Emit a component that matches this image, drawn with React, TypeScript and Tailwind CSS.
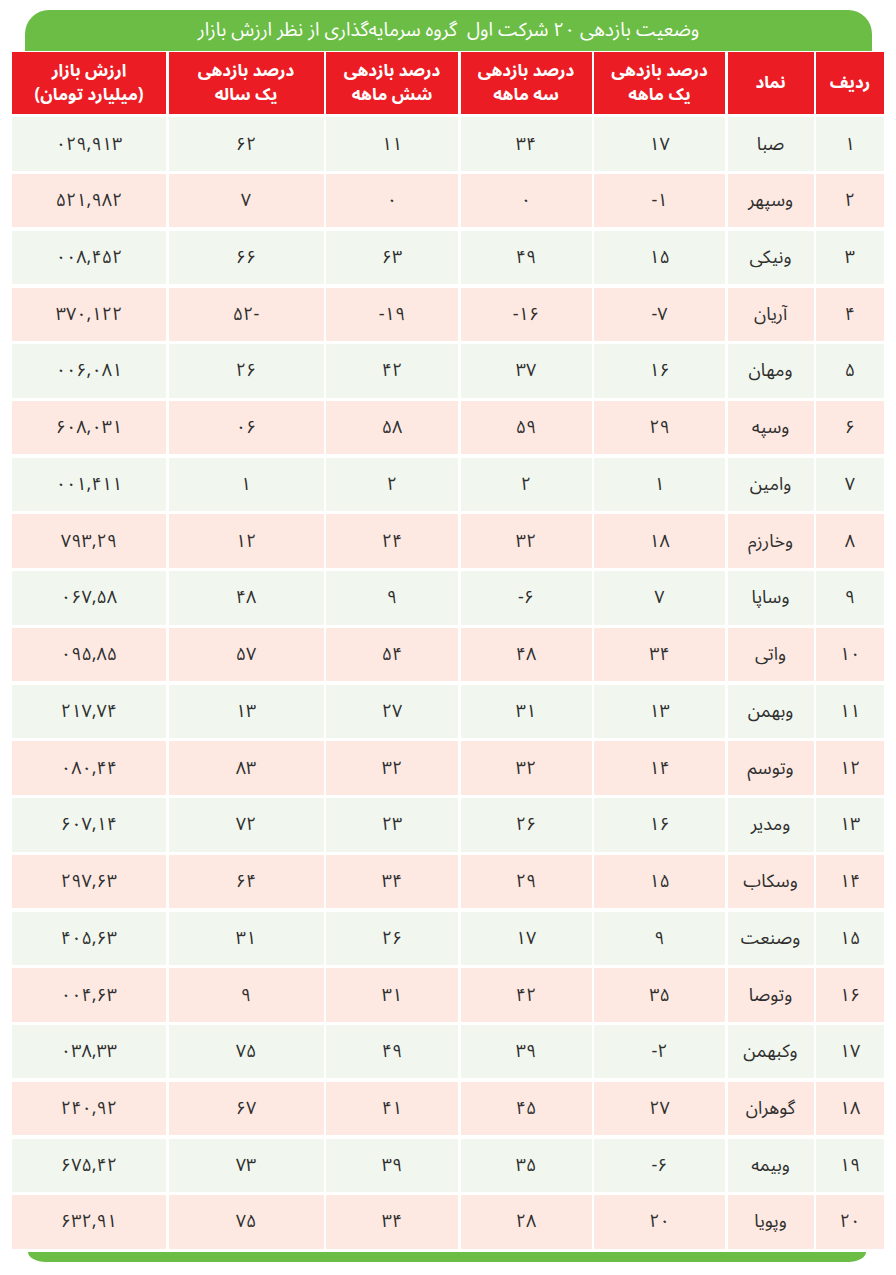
const rows: string[][] = [
  ["۱", "صبا", "۱۷", "۳۴", "۱۱", "۶۲", "۰۲۹,۹۱۳"],
  ["۲", "وسپهر", "-۱", "۰", "۰", "۷", "۵۲۱,۹۸۲"],
  ["۳", "ونیکی", "۱۵", "۴۹", "۶۳", "۶۶", "۰۰۸,۴۵۲"],
  ["۴", "آریان", "-۷", "-۱۶", "-۱۹", "۵۲-", "۳۷۰,۱۲۲"],
  ["۵", "ومهان", "۱۶", "۳۷", "۴۲", "۲۶", "۰۰۶,۰۸۱"],
  ["۶", "وسپه", "۲۹", "۵۹", "۵۸", "۰۶", "۶۰۸,۰۳۱"],
  ["۷", "وامین", "۱", "۲", "۲", "۱", "۰۰۱,۴۱۱"],
  ["۸", "وخارزم", "۱۸", "۳۲", "۲۴", "۱۲", "۷۹۳,۲۹"],
  ["۹", "وساپا", "۷", "-۶", "۹", "۴۸", "۰۶۷,۵۸"],
  ["۱۰", "واتی", "۳۴", "۴۸", "۵۴", "۵۷", "۰۹۵,۸۵"],
  ["۱۱", "وبهمن", "۱۳", "۳۱", "۲۷", "۱۳", "۲۱۷,۷۴"],
  ["۱۲", "وتوسم", "۱۴", "۳۲", "۳۲", "۸۳", "۰۸۰,۴۴"],
  ["۱۳", "ومدیر", "۱۶", "۲۶", "۲۳", "۷۲", "۶۰۷,۱۴"],
  ["۱۴", "وسکاب", "۱۵", "۲۹", "۳۴", "۶۴", "۲۹۷,۶۳"],
  ["۱۵", "وصنعت", "۹", "۱۷", "۲۶", "۳۱", "۴۰۵,۶۳"],
  ["۱۶", "وتوصا", "۳۵", "۴۲", "۳۱", "۹", "۰۰۴,۶۳"],
  ["۱۷", "وکبهمن", "-۲", "۳۹", "۴۹", "۷۵", "۰۳۸,۳۳"],
  ["۱۸", "گوهران", "۲۷", "۴۵", "۴۱", "۶۷", "۲۴۰,۹۲"],
  ["۱۹", "وبیمه", "-۶", "۳۵", "۳۹", "۷۳", "۶۷۵,۴۲"],
  ["۲۰", "وپویا", "۲۰", "۲۸", "۳۴", "۷۵", "۶۳۲,۹۱"],
];

const headers: [string, string?][] = [
  ["ردیف"],
  ["نماد"],
  ["درصد بازدهی", "یک ماهه"],
  ["درصد بازدهی", "سه ماهه"],
  ["درصد بازدهی", "شش ماهه"],
  ["درصد بازدهی", "یک ساله"],
  ["ارزش بازار", "(میلیارد تومان)"],
];

export default function App() {
  return (
    <div
      dir="rtl"
      className="min-h-[1275px] w-[896px] bg-white pt-[10px] font-['Noto_Sans_Arabic','DejaVu_Sans',sans-serif]"
    >
      <div className="ml-[25px] mr-[24px] flex h-[41px] items-center justify-center rounded-t-[24px] bg-[#6cbd45]">
        <h1 className="whitespace-pre text-[19px] leading-none text-white">
          وضعیت بازدهی ۲۰ شرکت اول  گروه سرمایه‌گذاری از نظر ارزش بازار
        </h1>
      </div>

      <div className="mx-[12px] mt-[1px] grid grid-cols-[68px_86px_131px_131px_132px_155px_154px] gap-x-[2.5px] gap-y-[3.35px]">
        {headers.map(([a, b], i) => (
          <div
            key={i}
            className="flex h-[62px] flex-col items-center justify-center bg-[#ec1c24] text-[17px] font-bold leading-[24px] text-white"
          >
            <span>{a}</span>
            {b ? <span>{b}</span> : null}
          </div>
        ))}
        {rows.map((row, r) =>
          row.map((cell, c) => (
            <div
              key={r + "-" + c}
              className={
                "flex h-[53.4px] items-center justify-center text-[18px] text-[#2f2f2f] " +
                (r % 2 === 0 ? "bg-[#f1f7ee]" : "bg-[#fde9e2]")
              }
            >
              <span dir={c === 1 ? "rtl" : "ltr"}>{cell}</span>
            </div>
          ))
        )}
      </div>

      <div className="ml-[28px] mr-[30px] mt-[3px] h-[10px] rounded-b-[18px_10px] bg-[#6cbd45]" />
    </div>
  );
}
